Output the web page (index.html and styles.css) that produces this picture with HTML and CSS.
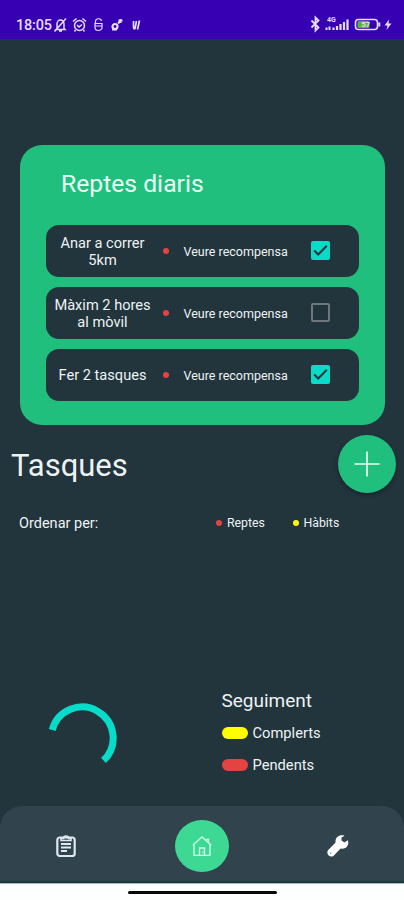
FILE: index.html
```
<!DOCTYPE html>
<html lang="ca">
<head>
<meta charset="utf-8">
<title>Tasques</title>
<link rel="stylesheet" href="styles.css">
</head>
<body>
<div class="screen">
  <header class="status">
    <span class="clock">18:05</span>
    <svg class="status-left" width="90" height="16" viewBox="0 0 90 16" fill="none" stroke="#e6dcfb" stroke-width="1.5">
      <path d="M4 11.500V7a3.500 4 0 0 1 7 0v4.500l1 1H3zM6 14h3M1.500 14.500 13 1.500"/>
      <circle cx="26.500" cy="8.500" r="5"/><path d="M20 4.500l3.500-3M33 4.500l-3.500-3M24 8l2 2 3-2.500M22.500 13l-1 1.500M30.500 13l1 1.500"/>
      <path d="M42.500 6V4.500a3 2.500 0 0 1 6-.5M42 6.500h7v4a3.500 3 0 0 1-7 0zM42.500 9h6" stroke-width="1.200"/>
      <circle cx="62" cy="9.500" r="2.500" stroke-width="2.200"/><path d="M65 6.500l3-3M65.500 3.500h4M67.500 2v4M59 12.500h5" stroke-width="2"/>
      <path d="M80.500 4v5.500q0 3 1.500 2l1.500-7.500M86.500 3.500l-2 9" stroke-width="1.700"/>
    </svg>
    <svg class="status-right" width="84" height="18" viewBox="0 0 84 18" fill="none" stroke="#e6dcfb">
      <path d="M3.500 5.500l7 7-3 3v-13l3 3-7 7" stroke-width="1.800"/>
      <text x="19" y="7" class="net">4G</text>
      <path d="M18.500 15v-2.500M21.500 15v-3.500" stroke-width="2"/>
      <path d="M25.500 15v-2.500M29 15v-4M32.500 15V9M36 15V7M39.500 15V4.500" stroke-width="2.200"/>
      <rect x="47.500" y="4.500" width="22" height="10" rx="3" stroke-width="1.600"/>
      <path d="M71.300 7.500v4" stroke-width="2"/>
      <rect x="49.500" y="6" width="12" height="7" rx="1.500" fill="#52b83c" stroke="none"/>
      <text x="53.500" y="12.200" class="level">57</text>
      <path d="M81 4.500l-4.500 6h3l-1 4.500 5-6.500h-3z" fill="#e6dcfb" stroke="none"/>
    </svg>
  </header>

  <main class="content">
    <section class="card">
      <h2>Reptes diaris</h2>
      <ul class="challenges">
        <li><span class="name">Anar a correr<br>5km</span><i class="dot red"></i><span class="reward">Veure recompensa</span>
          <span class="check on"><svg width="19" height="19" viewBox="0 0 19 19"><path d="M3.200 9.500l4 4 8.600-8.700" fill="none" stroke="#22343c" stroke-width="2"/></svg></span></li>
        <li><span class="name">Màxim 2 hores<br>al mòvil</span><i class="dot red"></i><span class="reward">Veure recompensa</span>
          <span class="check"></span></li>
        <li><span class="name">Fer 2 tasques</span><i class="dot red"></i><span class="reward">Veure recompensa</span>
          <span class="check on"><svg width="19" height="19" viewBox="0 0 19 19"><path d="M3.200 9.500l4 4 8.600-8.700" fill="none" stroke="#22343c" stroke-width="2"/></svg></span></li>
      </ul>
    </section>

    <section class="tasks-head">
      <h1>Tasques</h1>
      <button class="add" aria-label="Afegir"><svg width="26" height="26" viewBox="0 0 26 26"><path d="M13 .5v25M.5 13h25" stroke="#e9fff5" stroke-width="1.700"/></svg></button>
    </section>

    <section class="sort">
      <span class="sort-label">Ordenar per:</span>
      <span class="key key-reptes"><i class="dot red"></i>Reptes</span>
      <span class="key key-habits"><i class="dot yellow"></i>Hàbits</span>
    </section>

    <section class="tracking">
      <svg class="ring" width="70" height="70" viewBox="0 0 70 70"><path d="M4.200 28A31 31 0 1 1 55.500 58.500" fill="none" stroke="#08dcc8" stroke-width="7"/></svg>
      <div class="legend">
        <h3>Seguiment</h3>
        <p><i class="bar yellow"></i>Complerts</p>
        <p><i class="bar red"></i>Pendents</p>
      </div>
    </section>
  </main>

  <nav class="tabs">
    <a class="tab"><svg width="20" height="22" viewBox="0 0 20 22" fill="none" stroke="#dfe7f0">
      <rect x="1.300" y="2.500" width="17.400" height="18.500" rx="2.500" stroke-width="2.200"/>
      <path d="M5 3.500h2.500a2.500 2.500 0 0 1 5 0H15v2H5z" stroke-width="1.600"/>
      <path d="M5 9h10M5 12.500h10M5 16h6" stroke-width="1.800"/></svg></a>
    <a class="tab active"><svg width="20" height="20" viewBox="0 0 20 20" fill="none" stroke="#c9ffe4" stroke-width="1.400">
      <path d="M.7 9.200L10 1l9.300 8.200M2 8.500v11h16v-11M7.500 19.500V12h5v7.500M13.500 3.500h3V6.500M11 15.500v1.500"/></svg></a>
    <a class="tab"><svg width="22" height="22" viewBox="0 0 22 22">
      <path d="M20.800 5.200l-3.400 2.300-2.900-1.900V2.500L17.600.8C12.500-1 7.700 2.500 8.600 7.400L1 15.200C-1.300 18.700 2.700 23 6.400 20.900L13.600 13.500C18.800 14.700 22.700 10.500 20.800 5.200z" fill="#fff"/><circle cx="3.600" cy="18.200" r=".8" fill="#82939b"/></svg></a>
  </nav>
  <footer class="gesture"><i></i></footer>
</div>
</body>
</html>
```
FILE: styles.css
```
* { box-sizing: border-box; margin: 0; padding: 0; }
body { font-family: Roboto, "Liberation Sans", sans-serif; background: #22343c; color: #edf3f5; }
.screen { width: 404px; height: 900px; display: flex; flex-direction: column; overflow: hidden; background: #22343c; }

.status { height: 39px; flex: none; background: #3700b3; display: flex; padding: 15px 12px 0 16px; color: #e6dcfb; }
.clock { font-size: 14.500px; line-height: 21px; font-weight: 500; width: 37px; letter-spacing: -0.200px; white-space: nowrap; }
.status-left { margin-top: 2px; }
.status-right { margin-left: auto; }
.net { font-size: 7px; font-weight: 700; fill: #e6dcfb; stroke: none; }
.level { font-size: 7.500px; font-weight: 700; fill: #e6dcfb; stroke: none; }

.content { flex: 1; padding-top: 106px; }
.card { height: 280px; margin: 0 19px 0 20px; padding: 23px 26px 0; border-radius: 22px; background: #20bf7e; }
.card h2 { font-size: 24.700px; line-height: 32px; font-weight: 400; padding-left: 15px; color: #e9fff4; }
.challenges { list-style: none; display: flex; flex-direction: column; gap: 10.500px; margin-top: 25px; }
.challenges li { height: 51.500px; border-radius: 13px; background: #22343c; display: flex; align-items: center; }
.name { width: 113px; font-size: 14.600px; line-height: 17px; text-align: center; padding-top: 2px; }
.dot { display: block; flex: none; width: 6px; height: 6px; border-radius: 50%; }
.challenges .dot { margin-left: 4px; }
.red { background: #e44343; }
.yellow { background: #ffff00; }
.reward { font-size: 12.500px; margin-left: 14.500px; width: 127.500px; padding-top: 1px; white-space: nowrap; }
.check { width: 19px; height: 19px; border: 2px solid #6d777c; border-radius: 2px; }
.check.on { border: 0; background: #08dcc8; }
.check svg { display: block; }

.tasks-head { height: 58px; margin-top: 10px; padding: 0 8.500px 0 11px; display: flex; align-items: center; justify-content: space-between; }
.tasks-head h1 { font-size: 31px; line-height: 38px; font-weight: 400; padding-top: 4px; }
.add { width: 58px; height: 58px; border: 0; border-radius: 50%; background: #20bf7e; display: grid; place-items: center; box-shadow: 0 2px 4px rgba(0, 0, 0, .3); }

.sort { display: flex; align-items: center; height: 20px; margin-top: 20px; padding-left: 19px; }
.sort-label { font-size: 14.500px; width: 197px; padding-top: 1px; }
.key { display: flex; align-items: center; gap: 5px; font-size: 12.300px; }
.key-reptes { width: 76.500px; }

.tracking { display: flex; margin-top: 156px; padding-left: 48px; }
.ring { margin-top: 13px; }
.legend { margin-left: 103.500px; }
.legend h3 { font-size: 19px; line-height: 24px; font-weight: 400; margin-bottom: 10px; }
.legend p { display: flex; align-items: center; gap: 5px; height: 20px; font-size: 14.700px; margin-bottom: 12px; }
.bar { width: 26px; height: 12px; border-radius: 6px; }

.tabs { flex: none; height: 77px; background: #31444d; border-radius: 22px 22px 0 0; border-bottom: 2px solid #183b43; display: grid; grid-template-columns: repeat(3, 136px); justify-content: center; align-items: center; padding-top: 4px; }
.tab { width: 54px; height: 52px; border-radius: 50%; display: grid; place-items: center; justify-self: center; }
.tab.active { background: #3dd894; }
.gesture { flex: none; height: 17px; background: #fdfefe; border-top: 1px solid #a8b5ba; padding-top: 7px; }
.gesture i { display: block; width: 149px; height: 3px; margin: 0 auto; border-radius: 2px; background: #080808; }
```
